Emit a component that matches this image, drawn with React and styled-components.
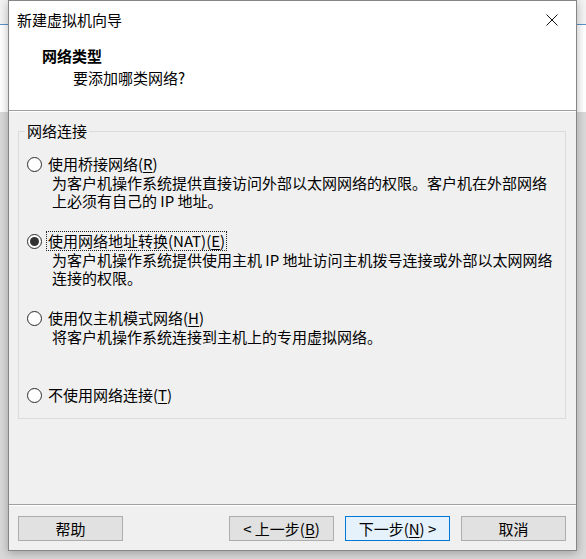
import React from 'react';
import styled, { createGlobalStyle } from 'styled-components';

const GlobalStyle = createGlobalStyle`
	html, body {
		margin: 0;
		padding: 0;
	}
	body {
		font-family: 'Noto Sans CJK SC', 'Noto Sans', sans-serif;
		font-size: 15px;
		color: #000;
	}
`;

// The desktop behind the wizard window
const Desktop = styled.div`
	width: 586px;
	height: 559px;
	overflow: hidden;
	padding-left: 8px;
	box-sizing: border-box;
	background: linear-gradient(
		to bottom,
		#f3f3f3 0,
		#f3f3f3 24px,
		#5b93c7 24px,
		#5b93c7 25px,
		#ffffff 25px,
		#ffffff 112px,
		#d9d9d9 112px
	);
`;

const Window = styled.div`
	width: 569px;
	height: 551px;
	box-sizing: border-box;
	border: 1px solid #868686;
	background: #f0f0f0;
	display: flex;
	flex-direction: column;
	box-shadow: 0 2px 9px rgba(0, 0, 0, 0.28);
`;

const Header = styled.div`
	background: #fff;
	height: 109px;
	border-bottom: 1px solid #a0a0a0;
	box-shadow: 0 1px 0 #fff;
	display: flex;
	flex-direction: column;
`;

const TitleBar = styled.div`
	height: 37px;
	display: flex;
	align-items: center;
	justify-content: space-between;
	padding-left: 8px;
	padding-bottom: 1px;
	line-height: 20px;
`;

const CloseButton = styled.div`
	width: 46px;
	height: 37px;
	display: flex;
	align-items: center;
	justify-content: center;
	margin-right: 1px;
`;

const PageTitle = styled.div`
	padding-left: 33px;
	font-weight: bold;
	line-height: 20px;
	margin-top: 7px;
`;

const PageSubtitle = styled.div`
	padding-left: 64px;
	line-height: 20px;
	margin-top: 2px;
`;

const Body = styled.div`
	flex: 1;
	padding: 11px 10px 0 9px;
`;

const Group = styled.fieldset`
	margin: 0;
	padding: 14px 0 13px 0;
	border: 1px solid #dcdcdc;
	display: flex;
	flex-direction: column;
	gap: 21px;
	min-width: 0;
`;

const Legend = styled.legend`
	margin-left: 6px;
	padding: 0 2px;
	line-height: 18px;
`;

const Option = styled.div`
	display: flex;
	flex-direction: column;
`;

const OptionRow = styled.div`
	display: flex;
	align-items: center;
	height: 20px;
	padding-left: 8px;
	gap: 4px;
`;

const RadioCircle = styled.span`
	width: 15px;
	height: 15px;
	box-sizing: border-box;
	border: 1px solid #2b2b2b;
	border-radius: 50%;
	background: #fff;
	display: flex;
	align-items: center;
	justify-content: center;
	flex: none;
	margin-top: 1px;

	&::after {
		content: '';
		width: 9px;
		height: 9px;
		border-radius: 50%;
		background: ${props => (props.checked ? '#333' : 'transparent')};
	}
`;

const OptionLabel = styled.span`
	padding: 0 1px;
	line-height: 18px;
	border: 1px dotted ${props => (props.focused ? '#222' : 'transparent')};
	white-space: nowrap;
`;

const Description = styled.div`
	padding-left: 33px;
	min-height: 36px;
`;

const DescLine = styled.div`
	height: 18px;
	line-height: 18px;
	white-space: nowrap;
`;

const Key = styled.span`
	text-decoration: underline;
	text-underline-offset: 2px;
`;

const Footer = styled.div`
	border-top: 1px solid #a0a0a0;
	box-shadow: inset 0 1px 0 #fff;
	height: 46px;
	box-sizing: border-box;
	padding: 11px 10px 0 9px;
	display: flex;
	gap: 11px;
`;

const Spacer = styled.div`
	flex: 1;
`;

const Button = styled.div`
	width: 105px;
	height: 25px;
	box-sizing: border-box;
	border: 1px solid ${props => (props.primary ? '#0078d7' : '#adadad')};
	background: ${props => (props.primary ? '#e5f1fb' : '#e1e1e1')};
	display: flex;
	align-items: center;
	justify-content: center;
	line-height: 20px;
	white-space: nowrap;
`;

const CloseIcon = () => (
	<svg width='12' height='12' viewBox='0 0 12 12'>
		<path d='M0.5 0.5 L11.5 11.5 M11.5 0.5 L0.5 11.5' stroke='#111' strokeWidth='1' fill='none' />
	</svg>
);

const options = [
	{
		label: '使用桥接网络(',
		key: 'R',
		rest: ')',
		lines: ['为客户机操作系统提供直接访问外部以太网网络的权限。客户机在外部网络', '上必须有自己的 IP 地址。'],
	},
	{
		label: '使用网络地址转换(NAT)(',
		key: 'E',
		rest: ')',
		lines: ['为客户机操作系统提供使用主机 IP 地址访问主机拨号连接或外部以太网网络', '连接的权限。'],
		checked: true,
	},
	{
		label: '使用仅主机模式网络(',
		key: 'H',
		rest: ')',
		lines: ['将客户机操作系统连接到主机上的专用虚拟网络。'],
	},
	{
		label: '不使用网络连接(',
		key: 'T',
		rest: ')',
	},
];

const App = () => (
	<>
		<GlobalStyle />
		<Desktop>
			<Window>
				<Header>
					<TitleBar>
						<span>新建虚拟机向导</span>
						<CloseButton>
							<CloseIcon />
						</CloseButton>
					</TitleBar>
					<PageTitle>网络类型</PageTitle>
					<PageSubtitle>要添加哪类网络?</PageSubtitle>
				</Header>

				<Body>
					<Group>
						<Legend>网络连接</Legend>
						{options.map((opt, i) => (
							<Option key={i}>
								<OptionRow>
									<RadioCircle checked={opt.checked} />
									<OptionLabel focused={opt.checked}>
										{opt.label}
										<Key>{opt.key}</Key>
										{opt.rest}
									</OptionLabel>
								</OptionRow>
								{opt.lines && (
									<Description>
										{opt.lines.map((line, j) => (
											<DescLine key={j}>{line}</DescLine>
										))}
									</Description>
								)}
							</Option>
						))}
					</Group>
				</Body>

				<Footer>
					<Button>帮助</Button>
					<Spacer />
					<Button>
						&lt; 上一步(<Key>B</Key>)
					</Button>
					<Button primary>
						下一步(<Key>N</Key>) &gt;
					</Button>
					<Button>取消</Button>
				</Footer>
			</Window>
		</Desktop>
	</>
);

export default App;
